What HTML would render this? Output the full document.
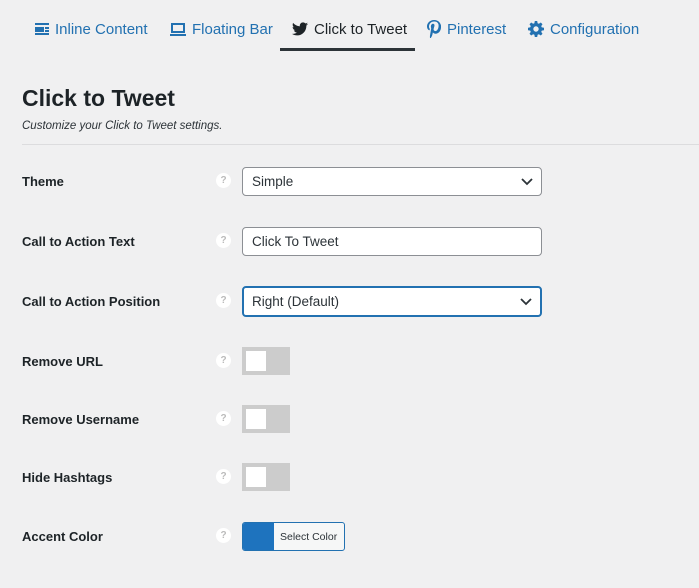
<!DOCTYPE html>
<html><head><meta charset="utf-8"><style>
*{box-sizing:border-box;margin:0;padding:0}
body{width:699px;height:588px;background:#f0f0f1;font-family:"Liberation Sans",sans-serif;color:#1d2327;position:relative;overflow:hidden}
.a{position:absolute}
.tab{position:absolute;top:19px;font-size:15px;color:#2271b1;white-space:nowrap;display:flex;align-items:center;gap:6px;height:20px}
.tab svg{fill:currentColor}
.lbl{position:absolute;left:22px;font-size:13px;font-weight:bold;color:#1d2327}
.q{position:absolute;left:216px;width:15px;height:15px;border-radius:50%;background:#fff;color:#bbb;font-size:10px;font-weight:bold;text-align:center;line-height:15px}
.inp{position:absolute;left:242px;width:300px;height:29px;background:#fff;border:1px solid #8c8f94;border-radius:4px;font-size:13.5px;padding-left:9px;line-height:27px;color:#2c3338}
.inp svg{position:absolute;right:8px;top:10px}
.tg{position:absolute;left:242px;width:48px;height:28px;background:#ccc}
.tg i{position:absolute;left:4px;top:4px;width:20px;height:20px;background:#fff}
</style></head><body>
<div class="tab" style="left:35px"><svg width="14" height="14" viewBox="0 0 14 14"><rect x="0" y="1" width="14" height="2"/><rect x="0" y="5" width="9" height="5"/><rect x="10" y="5" width="4" height="2"/><rect x="10" y="8" width="4" height="2"/><rect x="0" y="11" width="14" height="2"/></svg>Inline Content</div>
<div class="tab" style="left:170px"><svg width="16" height="14" viewBox="0 0 16 14"><path d="M1 1h14v10H1z M3 3v6h10V3z" fill-rule="evenodd"/><rect x="0" y="12" width="16" height="2"/></svg>Floating Bar</div>
<div class="tab" style="left:292px;color:#1d2327"><svg width="16" height="14" viewBox="0 0 24 20"><path d="M24 2.4c-.9.4-1.8.6-2.8.8 1-.6 1.800-1.6 2.2-2.7-1 .6-2 1-3.1 1.2C19.3.7 18 0 16.6 0c-2.7 0-4.9 2.2-4.9 4.900 0 .4 0 .8.1 1.1C7.7 5.8 4.1 3.9 1.7.9c-.4.7-.7 1.6-.7 2.5 0 1.7.9 3.2 2.2 4.1-.8 0-1.6-.2-2.2-.6v.1c0 2.4 1.7 4.4 3.9 4.8-.4.1-.8.2-1.3.2-.3 0-.6 0-.9-.1.6 2 2.4 3.4 4.6 3.4-1.7 1.3-3.8 2.1-6.1 2.1-.4 0-.8 0-1.2-.1C2.2 18.8 4.8 19.6 7.5 19.6c9.1 0 14-7.5 14-14v-.6c1-.7 1.8-1.6 2.5-2.6z"/></svg>Click to Tweet</div>
<div class="a" style="left:280px;top:48px;width:135px;height:3px;background:#2c3338"></div>
<div class="tab" style="left:427px"><svg width="14" height="18" viewBox="0 0 14 18"><path d="M7.3 0C2.4 0 0 3.5 0 6.4c0 1.8.7 3.3 2.1 3.9.2.1.4 0 .5-.3l.2-.8c.1-.2 0-.3-.1-.5-.4-.5-.7-1.2-.7-2.1 0-2.7 2-5.1 5.2-5.100 2.800 0 4.400 1.700 4.400 4 0 3-1.300 5.600-3.300 5.600-1.100 0-1.900-.9-1.700-2 .3-1.300.9-2.800.9-3.800 0-.9-.5-1.600-1.500-1.600-1.200 0-2.100 1.200-2.100 2.800 0 1 .3 1.700.3 1.700L3.100 15c-.4 1.600 0 3.600 0 3.800l.2-.1c.1-.2 1.400-1.800 1.900-3.400l.7-2.900c.4.7 1.400 1.300 2.600 1.300 3.400 0 5.600-3.100 5.600-7.200C14 3.200 11.300 0 7.300 0z"/></svg>Pinterest</div>
<div class="tab" style="left:528px"><svg width="16" height="16" viewBox="0 0 16 16"><path d="M6.8 0h2.4l.4 2.2 1.3.6 1.9-1.3 1.7 1.7-1.3 1.9.6 1.3 2.2.4v2.4l-2.2.4-.6 1.3 1.3 1.9-1.7 1.7-1.9-1.3-1.3.6-.4 2.2H6.8l-.4-2.2-1.3-.6-1.9 1.3-1.7-1.7 1.3-1.9-.6-1.3L0 9.2V6.8l2.2-.4.6-1.3-1.3-1.9 1.7-1.7 1.9 1.3 1.3-.6zM8 5.3a2.7 2.7 0 100 5.4 2.7 2.7 0 000-5.4z" fill-rule="evenodd"/></svg>Configuration</div>

<div class="a" style="left:22px;top:85px;font-size:23px;font-weight:bold;color:#1d2327">Click to Tweet</div>
<div class="a" style="left:22px;top:120px;font-size:11.5px;font-style:italic;color:#2c3338">Customize your Click to Tweet settings.</div>
<div class="a" style="left:22px;top:144px;width:677px;height:1px;background:#dcdcde"></div>

<div class="lbl" style="top:174px">Theme</div><div class="q" style="top:173px">?</div>
<div class="inp" style="top:167px">Simple<svg width="12" height="8" viewBox="0 0 12 8"><path d="M1 1l5 5 5-5" stroke="#2c3338" stroke-width="1.8" fill="none"/></svg></div>
<div class="lbl" style="top:234px">Call to Action Text</div><div class="q" style="top:233px">?</div>
<div class="inp" style="top:227px">Click To Tweet</div>
<div class="lbl" style="top:294px">Call to Action Position</div><div class="q" style="top:293px">?</div>
<div class="inp" style="top:286px;height:31px;border:2px solid #2271b1;padding-left:8px">Right (Default)<svg width="12" height="8" viewBox="0 0 12 8"><path d="M1 1l5 5 5-5" stroke="#2c3338" stroke-width="1.8" fill="none"/></svg></div>
<div class="lbl" style="top:354px">Remove URL</div><div class="q" style="top:353px">?</div><div class="tg" style="top:347px"><i></i></div>
<div class="lbl" style="top:412px">Remove Username</div><div class="q" style="top:411px">?</div><div class="tg" style="top:405px"><i></i></div>
<div class="lbl" style="top:470px">Hide Hashtags</div><div class="q" style="top:469px">?</div><div class="tg" style="top:463px"><i></i></div>
<div class="lbl" style="top:529px">Accent Color</div><div class="q" style="top:528px">?</div>
<div class="a" style="left:242px;top:522px;width:103px;height:29px;border:1px solid #2271b1;border-radius:3px;background:#f6f7f7;overflow:hidden">
<div class="a" style="left:0;top:0;width:31px;height:27px;background:#1e73be"></div>
<div class="a" style="left:37px;top:8px;font-size:10.5px;color:#2c3338">Select Color</div></div>
</body></html>
